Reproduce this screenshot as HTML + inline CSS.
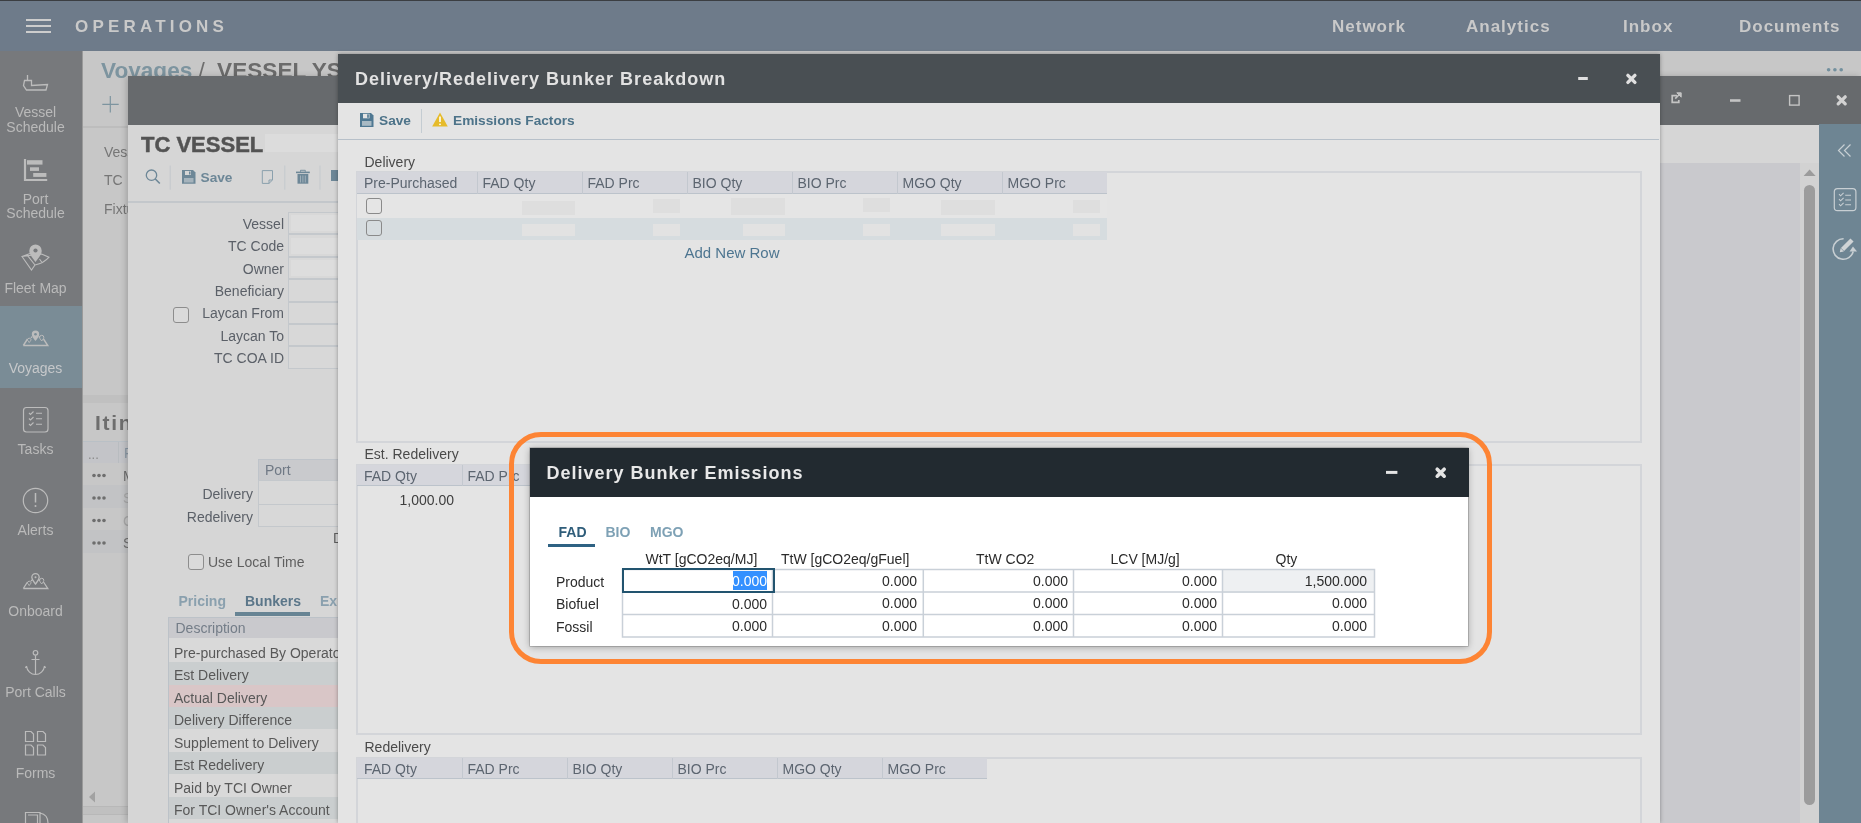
<!DOCTYPE html>
<html><head><meta charset="utf-8">
<style>
*{box-sizing:border-box;margin:0;padding:0}
html,body{width:1861px;height:823px;overflow:hidden;background:#c8c8c8;font-family:"Liberation Sans",sans-serif;font-size:14px;line-height:16px}
.a{position:absolute}
.t{position:absolute;white-space:nowrap;line-height:16px}
.b{font-weight:bold}
svg{position:absolute;overflow:visible}
</style></head><body><div id="root" style="position:absolute;left:0;top:0;width:1861px;height:823px;will-change:transform">

<!-- ============ BASE LAYER ============ -->
<div class="a" style="left:0;top:0;width:1861px;height:1px;background:#3b3e42"></div>
<div id="topbar" class="a" style="left:0;top:1px;width:1861px;height:50px;background:#6e7b8a">
  <div class="a" style="left:26px;top:17.9px;width:25px;height:2px;background:#cdcdcd"></div>
  <div class="a" style="left:26px;top:24px;width:25px;height:2px;background:#cdcdcd"></div>
  <div class="a" style="left:26px;top:30.2px;width:25px;height:2px;background:#cdcdcd"></div>
  <div class="t b" style="left:75px;top:16px;font-size:17px;line-height:19px;letter-spacing:4.2px;color:#c9c9c9">OPERATIONS</div>
  <div class="t b" style="left:1332px;top:16px;font-size:17px;line-height:19px;letter-spacing:1px;color:#c9c9c9">Network</div>
  <div class="t b" style="left:1466px;top:16px;font-size:17px;line-height:19px;letter-spacing:1px;color:#c9c9c9">Analytics</div>
  <div class="t b" style="left:1623px;top:16px;font-size:17px;line-height:19px;letter-spacing:1px;color:#c9c9c9">Inbox</div>
  <div class="t b" style="left:1739px;top:16px;font-size:17px;line-height:19px;letter-spacing:1px;color:#c9c9c9">Documents</div>
</div>

<div id="sidebar" class="a" style="left:0;top:51px;width:82px;height:772px;background:#77797c">
  <div class="a" style="left:0;top:255px;width:82px;height:82px;background:#7a8c96"></div>
</div>
<svg width="82" height="823" style="left:0;top:0" fill="none" stroke="#bcbcbc" stroke-width="1.2">
  <!-- ship -->
  <path d="M27.5,75 V80.5 H24.5 L23.5,85.5 L26.5,90 H46 L47.5,84.5 L31.5,85.5 V80.5 H27.5" stroke-width="1.3"/>
  <!-- port schedule -->
  <path d="M25,159 V180 H47.2" stroke-width="2.2"/>
  <rect x="27" y="160.2" width="15.5" height="4.4" fill="#bcbcbc" stroke="none"/>
  <rect x="30" y="167.3" width="9" height="3.6" fill="#bcbcbc" stroke="none"/>
  <rect x="33.2" y="173" width="13.2" height="3.9" fill="#bcbcbc" stroke="none"/>
  <!-- fleet map -->
  <path d="M22,256.5 L30,253.5 M41.5,254 L49,257.2 C45,262 40,264 35,265 L31.5,270 L22,256.5 Z M27,254.8 L35,265 M39.5,259 L42,262.5" stroke-width="1.1"/>
  <path d="M35.5,262 C33,258 29.3,255 29.3,250.7 A6.2,6.2 0 0 1 41.7,250.7 C41.7,255 38,258 35.5,262 Z" fill="#bcbcbc" stroke="none"/>
  <circle cx="35.5" cy="250.5" r="2.1" fill="#77797c" stroke="none"/>
  <!-- voyages -->
  <path d="M23.3,345.5 H47.8 L43.5,339 M27.5,339 L23.3,345.5 M32,336.8 L31,337.8 M38.8,336.8 L40,337.2" stroke-width="1.4"/>
  <path d="M35.5,341 C34,339 31.8,337 31.8,334.3 A3.7,3.7 0 0 1 39.2,334.3 C39.2,337 37,339 35.5,341 Z" fill="#bcbcbc" stroke="none"/>
  <circle cx="35.5" cy="334.2" r="1.3" fill="#7a8c96" stroke="none"/>
  <path d="M41.7,341 C41,339.8 39.6,338.6 39.6,337.4 A2.1,2.1 0 0 1 43.8,337.4 C43.8,338.6 42.4,339.8 41.7,341 Z" stroke-width="1"/>
  <path d="M29.2,342.5 C28.6,341.5 27.5,340.6 27.5,339.6 A1.8,1.8 0 0 1 31,339.6 C31,340.6 29.8,341.5 29.2,342.5 Z" stroke-width="1"/>
  <!-- tasks -->
  <rect x="23.5" y="407.5" width="24.5" height="24.5" rx="3"/>
  <path d="M29,413 l1.5,1.5 l3,-3 M29,418.5 l1.5,1.5 l3,-3 M29,424 l1.5,1.5 l3,-3 M36,413.3 H42 M36,418.8 H42 M36,424.3 H42" stroke-width="1.1"/>
  <!-- alerts -->
  <circle cx="35.5" cy="500.5" r="12.2"/>
  <path d="M35.5,493 V502.5" stroke-width="1.5"/>
  <circle cx="35.5" cy="506" r="1" fill="#bcbcbc" stroke="none"/>
  <!-- onboard -->
  <path d="M23.3,588.5 H47.8 L43.5,582 M27.5,582 L23.3,588.5 M32,580 L31,581 M38.8,580 L40,580.3" stroke-width="1.3"/>
  <path d="M35.5,584 C34,582 31.8,580 31.8,577.3 A3.7,3.7 0 0 1 39.2,577.3 C39.2,580 37,582 35.5,584 Z" stroke-width="1.3"/>
  <circle cx="35.5" cy="577.2" r="1" fill="#bcbcbc" stroke="none"/>
  <path d="M41.7,584 C41,582.8 39.6,581.6 39.6,580.4 A2.1,2.1 0 0 1 43.8,580.4 C43.8,581.6 42.4,582.8 41.7,584 Z" stroke-width="1"/>
  <path d="M29.2,585.5 C28.6,584.5 27.5,583.6 27.5,582.6 A1.8,1.8 0 0 1 31,582.6 C31,583.6 29.8,584.5 29.2,585.5 Z" stroke-width="1"/>
  <!-- anchor -->
  <circle cx="35.5" cy="652.8" r="2.3"/>
  <path d="M35.5,655.2 V674.5 M31.5,659.5 H39.5 M26.5,666 C27,671 31,674.5 35.5,674.5 C40,674.5 44,671 44.5,666 M26.5,666 l-1,2 M44.5,666 l1,2" stroke-width="1.2"/>
  <!-- forms -->
  <path d="M25.5,731.5 H31 L33.5,734 V741.5 H25.5 Z M37.5,731.5 H43 L45.5,734 V741.5 H37.5 Z M25.5,745 H31 L33.5,747.5 V755 H25.5 Z M37.5,745 H43 L45.5,747.5 V755 H37.5 Z" stroke-width="1.2"/>
  <!-- truck partial -->
  <path d="M25.5,823 V812.5 H40 V823 M28,815 H37.5 V823 M40,813 C45,814 48,818 48,823" stroke-width="1.2"/>
</svg>
<div class="t" style="left:0;width:71px;text-align:center;top:105px;color:#bababa;line-height:14.5px">Vessel<br>Schedule</div>
<div class="t" style="left:0;width:71px;text-align:center;top:191.5px;color:#bababa;line-height:14.6px">Port<br>Schedule</div>
<div class="t" style="left:0;width:71px;text-align:center;top:280px;color:#bababa">Fleet Map</div>
<div class="t" style="left:0;width:71px;text-align:center;top:360px;color:#c6c8ca">Voyages</div>
<div class="t" style="left:0;width:71px;text-align:center;top:441px;color:#bababa">Tasks</div>
<div class="t" style="left:0;width:71px;text-align:center;top:522px;color:#bababa">Alerts</div>
<div class="t" style="left:0;width:71px;text-align:center;top:603px;color:#bababa">Onboard</div>
<div class="t" style="left:0;width:71px;text-align:center;top:684px;color:#bababa">Port Calls</div>
<div class="t" style="left:0;width:71px;text-align:center;top:765px;color:#bababa">Forms</div>

<div id="base" class="a" style="left:82px;top:51px;width:1779px;height:772px;background:#c7c7c7;border-left:1px solid #9a9a9a">
</div>
<div class="t b" style="left:101px;top:58px;font-size:22.6px;line-height:26px;color:#7d949f">Voyages<span style="color:#6e6e6e;font-weight:normal"> / </span><span style="color:#6b6b6b;margin-left:6px">VESSEL YS</span></div>
<svg width="20" height="20" style="left:100px;top:94px" stroke="#7d949f" stroke-width="1.2"><path d="M10.3,2 V18.5 M2.3,10.3 H18.7"/></svg>
<div class="a" style="left:83px;top:126px;width:60px;height:2px;background:#bdbdbd"></div>
<div class="t" style="left:104px;top:144px;color:#767676">Vessel</div>
<div class="t" style="left:104px;top:172px;color:#767676">TC</div>
<div class="t" style="left:104px;top:201px;color:#767676">Fixture</div>
<div class="a" style="left:83px;top:395px;width:60px;height:8px;background:#c0c0c0"></div>
<div class="t b" style="left:95px;top:410.8px;font-size:21px;line-height:24px;letter-spacing:1.7px;color:#6e6e6e">Itinerary</div>
<div class="a" style="left:83px;top:441px;width:60px;height:22px;background:#c3c4c8;border-top:1px solid #b9c0c6"></div>
<div class="t" style="left:88px;top:447px;color:#8a8a8a;font-size:13px">...</div>
<div class="a" style="left:118px;top:442px;width:1px;height:21px;background:#b8bcc0"></div>
<div class="t" style="left:124px;top:445px;color:#8a98a5">P</div>
<div class="a" style="left:83px;top:485px;width:60px;height:23px;background:#c2c3c5"></div>
<div class="a" style="left:83px;top:530px;width:60px;height:23px;background:#c2c3c5"></div>
<svg width="30" height="100" style="left:88px;top:460px" fill="#6e6e6e"><circle cx="6" cy="15.5" r="1.8"/><circle cx="11" cy="15.5" r="1.8"/><circle cx="16" cy="15.5" r="1.8"/><circle cx="6" cy="38" r="1.8"/><circle cx="11" cy="38" r="1.8"/><circle cx="16" cy="38" r="1.8"/><circle cx="6" cy="60.5" r="1.8"/><circle cx="11" cy="60.5" r="1.8"/><circle cx="16" cy="60.5" r="1.8"/><circle cx="6" cy="83" r="1.8"/><circle cx="11" cy="83" r="1.8"/><circle cx="16" cy="83" r="1.8"/></svg>
<div class="t" style="left:123px;top:468px;color:#6e6e6e">M</div>
<div class="t" style="left:123px;top:490px;color:#a8a8a8">S</div>
<div class="t" style="left:123px;top:513px;color:#a8a8a8">C</div>
<div class="t" style="left:123px;top:535px;color:#6e6e6e">S</div>
<svg width="10" height="14" style="left:88px;top:790px" fill="#a2a2a2"><path d="M7,1.5 V12.5 L1,7 Z"/></svg>
<div class="a" style="left:83px;top:806px;width:60px;height:9px;background:#c0c0c0;border-top:1px solid #b8b8b8;border-bottom:1px solid #b8b8b8"></div>
<svg width="20" height="8" style="left:1826px;top:65px" fill="#73909e"><circle cx="2.6" cy="4.7" r="1.8"/><circle cx="8.9" cy="4.7" r="1.8"/><circle cx="15.2" cy="4.7" r="1.8"/></svg>

<!-- ============ TC VESSEL WINDOW ============ -->
<div id="tcwin" class="a" style="left:128px;top:76px;width:1733px;height:747px;background:#d6d6d6;box-shadow:-2px 0 6px rgba(0,0,0,.18)">
  <div class="a" style="left:0;top:0;width:1733px;height:48.6px;background:#676a6d"></div>
</div>
<!-- TC header icons -->
<svg width="200" height="30" style="left:1660px;top:86px" fill="none" stroke="#c4c4c4">
  <path d="M17,9.6 H12.2 V16.3 H18.8 V14" stroke-width="1.7"/>
  <path d="M15.2,12.6 L20.5,7.3" stroke-width="1.6"/>
  <path d="M16.8,6.8 H21.2 V11.2 Z" fill="#c4c4c4" stroke-width="1"/>
  <path d="M70,14.5 H80.5" stroke-width="2.6"/>
  <rect x="129.6" y="9.6" width="9.5" height="9.5" stroke-width="1.4"/>
  <path d="M178.2,10.8 L185.2,17.8 M185.2,10.8 L178.2,17.8" stroke-width="3.3" stroke="#d2d2d2" stroke-linecap="round"/>
</svg>
<!-- TC left content -->
<div class="a" style="left:265px;top:134px;width:73px;height:18px;background:#dcdcdc"></div>
<div class="t b" style="left:141px;top:133px;font-size:22px;line-height:24px;color:#535353;-webkit-text-stroke:0.5px #535353">TC VESSEL</div>
<svg width="200" height="40" style="left:135px;top:160px" fill="none" stroke="#6d8797">
  <circle cx="16.5" cy="15.2" r="5.2" stroke-width="1.3"/>
  <path d="M20.3,19 L24.8,23.5" stroke-width="1.6"/>
  <path d="M35.2,5.5 V29.7" stroke="#c4c9cd" stroke-width="1"/>
  <path d="M127.3,10.6 H137.5 V20 L134,23.4 H127.3 Z M134,23.4 V20 H137.5" stroke-width="1" stroke="#8aa0ad"/>
  <path d="M149.8,5.5 V29.7 M185,5.5 V29.7" stroke="#c4c9cd" stroke-width="1"/>
</svg>
<svg width="16" height="16" style="left:181.5px;top:170px" fill="#6d8797"><path d="M0,0 H11 L13.5,2.5 V13.7 H0 Z" /><rect x="3" y="1" width="6" height="4" fill="#d6d6d6"/><rect x="7" y="1.5" width="1.5" height="3"/><rect x="2" y="8" width="9.5" height="4.5" fill="#a5b3bc"/></svg>
<div class="t b" style="left:200.5px;top:170px;font-size:13.7px;color:#6d8797">Save</div>
<svg width="16" height="16" style="left:296px;top:170px" fill="#6d8797"><rect x="0" y="1.6" width="13.8" height="1.6"/><path d="M4.5,1.8 V0.3 H9.3 V1.8" fill="none" stroke="#6d8797" stroke-width="0.9"/><path d="M1.5,4 H12.3 V13.7 H1.5 Z"/><path d="M4.5,5.5 V12.5 M6.9,5.5 V12.5 M9.3,5.5 V12.5" stroke="#a5b3bc" stroke-width="0.9"/></svg>
<div class="a" style="left:331px;top:170px;width:7px;height:11px;background:#6d8797"></div>
<div class="a" style="left:128px;top:200.5px;width:210px;height:2px;background:#c3c7cb"></div>

<div class="t" style="left:128px;width:156px;text-align:right;top:212.8px;color:#5b6068;line-height:22.4px">Vessel<br>TC Code<br>Owner<br>Beneficiary<br>Laycan From<br>Laycan To<br>TC COA ID</div>
<div class="a" style="left:287.5px;top:212.0px;width:60px;height:22.4px;border:1.6px solid #c4c8cc;border-right:none;background:#d8d8d8"></div>
<div class="a" style="left:290.5px;top:215.2px;width:60px;height:16px;background:#dddddd"></div>
<div class="a" style="left:287.5px;top:234.4px;width:60px;height:22.4px;border:1.6px solid #c4c8cc;border-right:none;background:#d8d8d8"></div>
<div class="a" style="left:290.5px;top:237.6px;width:60px;height:16px;background:#dddddd"></div>
<div class="a" style="left:287.5px;top:256.8px;width:60px;height:22.4px;border:1.6px solid #c4c8cc;border-right:none;background:#d8d8d8"></div>
<div class="a" style="left:290.5px;top:260.0px;width:60px;height:16px;background:#dddddd"></div>
<div class="a" style="left:287.5px;top:279.2px;width:60px;height:22.4px;border:1.6px solid #c4c8cc;border-right:none;background:#d8d8d8"></div>
<div class="a" style="left:287.5px;top:301.6px;width:60px;height:22.4px;border:1.6px solid #c4c8cc;border-right:none;background:#d8d8d8"></div>
<div class="a" style="left:287.5px;top:324.0px;width:60px;height:22.4px;border:1.6px solid #c4c8cc;border-right:none;background:#d8d8d8"></div>
<div class="a" style="left:287.5px;top:346.4px;width:60px;height:22.4px;border:1.6px solid #c4c8cc;border-right:none;background:#d8d8d8"></div>

<div class="a" style="left:173px;top:307px;width:16px;height:16px;border:1px solid #8d8d8d;border-radius:3px;background:#dadada"></div>

<div class="a" style="left:258px;top:459px;width:90px;height:22px;background:#c9cacd;border:1px solid #bfc4ca;border-right:none"></div>
<div class="t" style="left:265px;top:462px;color:#707985">Port</div>
<div class="a" style="left:258px;top:480px;width:90px;height:24.5px;border:1.6px solid #c4c8cc;border-right:none;background:#d8d8d8"></div>
<div class="a" style="left:258px;top:503.5px;width:90px;height:23.3px;border:1.6px solid #c4c8cc;border-right:none;background:#d8d8d8"></div>
<div class="t" style="left:128px;width:125px;text-align:right;top:483px;color:#5b6068;line-height:22.6px">Delivery<br>Redelivery</div>
<div class="t" style="left:333px;top:530px;color:#5f5f5f">D</div>
<div class="a" style="left:188px;top:554px;width:16px;height:16px;border:1px solid #8d8d8d;border-radius:3px;background:#dadada"></div>
<div class="t" style="left:208px;top:554px;color:#5f5f5f">Use Local Time</div>
<div class="t b" style="left:178.5px;top:593px;color:#8aa0ae">Pricing</div>
<div class="t b" style="left:245px;top:593px;color:#5b7689">Bunkers</div>
<div class="t b" style="left:320px;top:593px;color:#8aa0ae">Ex</div>
<div class="a" style="left:235px;top:612px;width:74.5px;height:3.5px;background:#678494"></div>

<div class="a" style="left:168px;top:617px;width:180px;height:21px;background:#c9c9cd;border-left:1px solid #bcc2c8;border-top:1px solid #bcc2c8"></div>
<div class="t" style="left:175.5px;top:620.3px;color:#747d88">Description</div>
<div class="a" style="left:168px;top:638px;width:180px;height:185px;border-left:1px solid #bcc2c8;background:linear-gradient(#d9d9d9 0 24px,#cacecf 24px 46.8px,#d9c6c7 46.8px 69px,#cacecf 69px 91.5px,#d9d9d9 91.5px 114px,#cacecf 114px 136.5px,#d9d9d9 136.5px 159px,#cacecf 159px 181.5px,#d9d9d9 181.5px)"></div>
<div class="t" style="left:174px;top:641.5px;color:#585858;line-height:22.5px">Pre-purchased By Operator<br>Est Delivery<br>Actual Delivery<br>Delivery Difference<br>Supplement to Delivery<br>Est Redelivery<br>Paid by TCI Owner<br>For TCI Owner's Account</div>

<!-- TC right side -->
<div class="a" style="left:1659px;top:162.5px;width:141px;height:661px;background:#c9c9cd"></div>
<div class="a" style="left:1800px;top:162.5px;width:19px;height:661px;background:#d2d2d2"></div>
<svg width="14" height="8" style="left:1803px;top:168.5px" fill="#9b9b9b"><path d="M0.6,7 L6.6,0.5 L12.6,7 Z"/></svg>
<div class="a" style="left:1804px;top:184.8px;width:11px;height:620px;background:#9c9c9c;border-radius:5.5px"></div>
<div class="a" style="left:1819px;top:124px;width:42px;height:699px;background:#6e8593"></div>
<svg width="42" height="140" style="left:1819px;top:130px" fill="none" stroke="#c8cfd3" stroke-width="1.2">
  <path d="M25.5,14.5 L19.5,20.5 L25.5,26.5 M31.5,14.5 L25.5,20.5 L31.5,26.5"/>
  <rect x="15.3" y="58.6" width="21.6" height="22" rx="3.2"/>
  <path d="M20,64.2 l1.6,1.6 l3,-3 M20,69.2 l1.6,1.6 l3,-3 M20,74.2 l1.6,1.6 l3,-3 M26.2,65.3 H32 M26.2,70 H32 M26.2,74.8 H32" stroke-width="1.1"/>
  <path d="M24.6,108.8 A10.2,10.2 0 1 0 34.2,121.5" stroke-width="1.6"/>
  <path d="M34,116.5 L38,121.5 L30.5,121.5 Z" fill="#c8cfd3" stroke="none"/>
  <path d="M23.5,119.5 L33,110" stroke-width="4.4" stroke="#d0d4d6"/>
  <path d="M20.8,122.3 L21.6,118.2 L24.9,121.5 Z" fill="#d0d4d6" stroke="none"/>
</svg>

<!-- ============ DELIVERY DIALOG ============ -->
<div id="dlg1" class="a" style="left:338px;top:54px;width:1321.5px;height:769px;background:#e4e4e4;box-shadow:0 0 4px rgba(0,0,0,.35)">
  <div class="a" style="left:0;top:0;width:1322px;height:49px;background:#494f53"></div>
</div>
<div class="t b" style="left:355px;top:69px;font-size:18px;line-height:20px;letter-spacing:1px;color:#e2e2e2">Delivery/Redelivery Bunker Breakdown</div>
<svg width="80" height="30" style="left:1570px;top:65px" fill="none" stroke="#e0e0e0">
  <path d="M8.2,13.5 H17.8" stroke-width="3"/>
  <path d="M57.9,10.4 L64.9,17.4 M64.9,10.4 L57.9,17.4" stroke-width="3.4" stroke-linecap="round"/>
</svg>
<svg width="16" height="16" style="left:360px;top:112.8px" fill="#4f7892"><path d="M0,0 H11 L13.5,2.5 V14 H0 Z" /><rect x="3" y="0.8" width="6.5" height="4.5" fill="#e4e4e4"/><rect x="7.2" y="1.3" width="1.6" height="3.5"/><rect x="2" y="8" width="9.5" height="4.8" fill="#a9bac4"/></svg>
<div class="t b" style="left:379px;top:113px;font-size:13.7px;color:#4d7389">Save</div>
<div class="a" style="left:421px;top:108.7px;width:1px;height:24px;background:#c4ccd2"></div>
<svg width="18" height="16" style="left:431.5px;top:112.3px"><path d="M8,0.5 L15.8,14.5 H0.2 Z" fill="#e6bb2a"/><path d="M8,4.5 V10" stroke="#fff" stroke-width="1.6"/><circle cx="8" cy="12.3" r="0.9" fill="#fff"/></svg>
<div class="t b" style="left:453px;top:113px;font-size:13.7px;color:#4d7389">Emissions Factors</div>
<div class="a" style="left:338px;top:138.8px;width:1321px;height:1.4px;background:#b7c0c9"></div>

<div class="t" style="left:364.5px;top:153.5px;color:#4a4a4a">Delivery</div>
<div class="a" style="left:356px;top:171px;width:1286px;height:272px;border:2px solid #d3d5d9"></div>
<div class="a" style="left:357px;top:172px;width:750px;height:21.5px;background:#d5d6dc;border-bottom:1px solid #bcc3cb"></div>
<div class="t" style="left:364px;top:175px;color:#5c6570">Pre-Purchased</div>
<div class="a" style="left:477px;top:172px;width:1px;height:21.5px;background:#c3c8cf"></div>
<div class="t" style="left:482.5px;top:175px;color:#5c6570">FAD Qty</div>
<div class="a" style="left:582px;top:172px;width:1px;height:21.5px;background:#c3c8cf"></div>
<div class="t" style="left:587.5px;top:175px;color:#5c6570">FAD Prc</div>
<div class="a" style="left:687px;top:172px;width:1px;height:21.5px;background:#c3c8cf"></div>
<div class="t" style="left:692.5px;top:175px;color:#5c6570">BIO Qty</div>
<div class="a" style="left:792px;top:172px;width:1px;height:21.5px;background:#c3c8cf"></div>
<div class="t" style="left:797.5px;top:175px;color:#5c6570">BIO Prc</div>
<div class="a" style="left:897px;top:172px;width:1px;height:21.5px;background:#c3c8cf"></div>
<div class="t" style="left:902.5px;top:175px;color:#5c6570">MGO Qty</div>
<div class="a" style="left:1002px;top:172px;width:1px;height:21.5px;background:#c3c8cf"></div>
<div class="t" style="left:1007.5px;top:175px;color:#5c6570">MGO Prc</div>

<div class="a" style="left:357px;top:194px;width:750px;height:23.5px;background:#e5e5e5"></div>
<div class="a" style="left:357px;top:217.5px;width:750px;height:22.5px;background:#d6dcdf"></div>
<div class="a" style="left:366px;top:197.7px;width:16px;height:16px;border:1.2px solid #8a8a8a;border-radius:3px"></div>
<div class="a" style="left:366px;top:220.3px;width:16px;height:16px;border:1.2px solid #8a8a8a;border-radius:3px"></div>
<div class="a" style="left:522px;top:200.5px;width:53px;height:14px;background:#dedede"></div>
<div class="a" style="left:653px;top:199px;width:27px;height:14px;background:#dedede"></div>
<div class="a" style="left:731px;top:198.3px;width:54px;height:16.5px;background:#dedede"></div>
<div class="a" style="left:863px;top:198px;width:27px;height:14px;background:#dedede"></div>
<div class="a" style="left:941px;top:199.5px;width:54px;height:15px;background:#dedede"></div>
<div class="a" style="left:1073px;top:200px;width:27px;height:13px;background:#dedede"></div>
<div class="a" style="left:522px;top:224px;width:53px;height:12px;background:#e2e2e2"></div>
<div class="a" style="left:653px;top:224px;width:27px;height:12px;background:#e2e2e2"></div>
<div class="a" style="left:743px;top:224px;width:42px;height:12px;background:#e2e2e2"></div>
<div class="a" style="left:863px;top:224px;width:27px;height:12px;background:#e2e2e2"></div>
<div class="a" style="left:941px;top:224px;width:54px;height:12px;background:#e2e2e2"></div>
<div class="a" style="left:1073px;top:224px;width:27px;height:12px;background:#e2e2e2"></div>
<div class="t" style="left:684.5px;top:243.5px;font-size:15px;line-height:17px;color:#4d7590">Add New Row</div>

<div class="t" style="left:364.5px;top:446px;color:#4a4a4a">Est. Redelivery</div>
<div class="a" style="left:356px;top:464px;width:1286px;height:271px;border:2px solid #d3d5d9"></div>
<div class="a" style="left:357px;top:465px;width:630px;height:21px;background:#d5d6dc;border-bottom:1px solid #bcc3cb"></div>
<div class="t" style="left:364px;top:467.5px;color:#5c6570">FAD Qty</div>
<div class="a" style="left:462px;top:465px;width:1px;height:21px;background:#c3c8cf"></div>
<div class="t" style="left:467.5px;top:467.5px;color:#5c6570">FAD Prc</div>
<div class="a" style="left:567px;top:465px;width:1px;height:21px;background:#c3c8cf"></div>
<div class="t" style="left:572.5px;top:467.5px;color:#5c6570">BIO Qty</div>
<div class="a" style="left:672px;top:465px;width:1px;height:21px;background:#c3c8cf"></div>
<div class="t" style="left:677.5px;top:467.5px;color:#5c6570">BIO Prc</div>
<div class="a" style="left:777px;top:465px;width:1px;height:21px;background:#c3c8cf"></div>
<div class="t" style="left:782.5px;top:467.5px;color:#5c6570">MGO Qty</div>
<div class="a" style="left:882px;top:465px;width:1px;height:21px;background:#c3c8cf"></div>
<div class="t" style="left:887.5px;top:467.5px;color:#5c6570">MGO Prc</div>

<div class="t" style="left:357px;width:97px;text-align:right;top:491.5px;color:#3e3e3e">1,000.00</div>

<div class="t" style="left:364.5px;top:738.5px;color:#4a4a4a">Redelivery</div>
<div class="a" style="left:356px;top:757px;width:1286px;height:80px;border:2px solid #d3d5d9"></div>
<div class="a" style="left:357px;top:758px;width:630px;height:21px;background:#d5d6dc;border-bottom:1px solid #bcc3cb"></div>
<div class="t" style="left:364px;top:760.5px;color:#5c6570">FAD Qty</div>
<div class="a" style="left:462px;top:758px;width:1px;height:21px;background:#c3c8cf"></div>
<div class="t" style="left:467.5px;top:760.5px;color:#5c6570">FAD Prc</div>
<div class="a" style="left:567px;top:758px;width:1px;height:21px;background:#c3c8cf"></div>
<div class="t" style="left:572.5px;top:760.5px;color:#5c6570">BIO Qty</div>
<div class="a" style="left:672px;top:758px;width:1px;height:21px;background:#c3c8cf"></div>
<div class="t" style="left:677.5px;top:760.5px;color:#5c6570">BIO Prc</div>
<div class="a" style="left:777px;top:758px;width:1px;height:21px;background:#c3c8cf"></div>
<div class="t" style="left:782.5px;top:760.5px;color:#5c6570">MGO Qty</div>
<div class="a" style="left:882px;top:758px;width:1px;height:21px;background:#c3c8cf"></div>
<div class="t" style="left:887.5px;top:760.5px;color:#5c6570">MGO Prc</div>

<!-- ============ EMISSIONS DIALOG ============ -->
<div id="dlg2" class="a" style="left:529.5px;top:448px;width:938.7px;height:198px;background:#fff;box-shadow:0 0 0 0.6px rgba(0,0,0,.25),0 1px 7px rgba(0,0,0,.3)">
  <div class="a" style="left:0;top:0;width:939px;height:48.6px;background:#222a30"></div>
</div>
<div class="t b" style="left:546.5px;top:462.8px;font-size:18px;line-height:20px;letter-spacing:1px;color:#e8e8e8">Delivery Bunker Emissions</div>
<svg width="80" height="30" style="left:1380px;top:458px" fill="none" stroke="#e4e4e4">
  <path d="M6,14.4 H17.4" stroke-width="3"/>
  <path d="M57.2,11.2 L64.2,18.2 M64.2,11.2 L57.2,18.2" stroke-width="3.6" stroke-linecap="round"/>
</svg>
<div class="t b" style="left:558.5px;top:524px;color:#2f5d7a">FAD</div>
<div class="t b" style="left:605.5px;top:524px;color:#7ea1b5">BIO</div>
<div class="t b" style="left:650px;top:524px;color:#7ea1b5">MGO</div>
<div class="a" style="left:548px;top:543.7px;width:47.3px;height:3.2px;background:#2f6283"></div>
<div class="t" style="left:645.5px;top:551px;color:#2b2b2b">WtT [gCO2eq/MJ]</div>
<div class="t" style="left:781px;top:551px;color:#2b2b2b">TtW [gCO2eq/gFuel]</div>
<div class="t" style="left:976px;top:551px;color:#2b2b2b">TtW CO2</div>
<div class="t" style="left:1110.5px;top:551px;color:#2b2b2b">LCV [MJ/g]</div>
<div class="t" style="left:1275.5px;top:551px;color:#2b2b2b">Qty</div>
<div class="t" style="left:556px;top:570.8px;color:#2b2b2b;line-height:22.5px">Product<br>Biofuel<br>Fossil</div>
<div class="a" style="left:1223px;top:570px;width:151px;height:22.5px;background:#eef0f2"></div>
<svg width="760" height="72" style="left:621px;top:568px" fill="none" stroke="#c9d0d8" stroke-width="1.5">
  <path d="M1.5,1.5 H753.5 V69 H1.5 Z M1.5,24 H753.5 M1.5,46.6 H753.5 M151.5,1.5 V69 M302.3,1.5 V69 M452.5,1.5 V69 M601.5,1.5 V69"/>
</svg>
<div class="a" style="left:622px;top:568.3px;width:153px;height:24.4px;border:2.4px solid #22546f"></div>
<div class="a" style="left:732.8px;top:570.7px;width:34.4px;height:19.6px;background:#3390ff"></div>
<div class="t" style="left:622px;width:145px;text-align:right;top:573px;color:#fff">0.000</div>
<div class="t" style="left:622px;width:145px;text-align:right;top:595.5px;color:#2b2b2b">0.000</div>
<div class="t" style="left:622px;width:145px;text-align:right;top:618px;color:#2b2b2b">0.000</div>
<div class="t" style="left:772px;width:145px;text-align:right;top:569.8px;color:#2b2b2b;line-height:22.5px">0.000<br>0.000<br>0.000</div>
<div class="t" style="left:923px;width:145px;text-align:right;top:569.8px;color:#2b2b2b;line-height:22.5px">0.000<br>0.000<br>0.000</div>
<div class="t" style="left:1073px;width:144px;text-align:right;top:569.8px;color:#2b2b2b;line-height:22.5px">0.000<br>0.000<br>0.000</div>
<div class="t" style="left:1222px;width:145px;text-align:right;top:569.8px;color:#2b2b2b;line-height:22.5px">1,500.000<br>0.000<br>0.000</div>

<div class="a" style="left:508.7px;top:432px;width:983.3px;height:232px;border:5px solid #fd8434;border-radius:32px"></div>

</div></body></html>
